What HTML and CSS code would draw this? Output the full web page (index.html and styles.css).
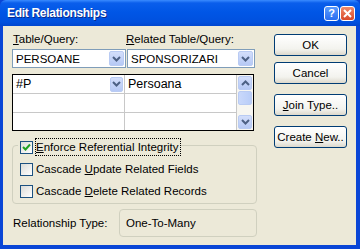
FILE: index.html
```html
<!DOCTYPE html>
<html lang="en">
<head>
  <meta charset="UTF-8">
  <title>Edit Relationships</title>
  <link rel="stylesheet" href="styles.css">
</head>
<body>

<div class="window">
  <!-- title bar -->
  <div class="titlebar">
    <span class="title">Edit Relationships</span>
    <div class="caption-btns">
      <span class="cap-btn help">?</span>
      <span class="cap-btn close">
        <svg width="9" height="9" viewBox="0 0 9 9"><path d="M1 1 L8 8 M8 1 L1 8" stroke="#fff" stroke-width="2"/></svg>
      </span>
    </div>
  </div>

  <div class="client">
    <div class="main">
      <div class="labels">
        <span class="lbl-left"><u>T</u>able/Query:</span>
        <span><u>R</u>elated Table/Query:</span>
      </div>

      <div class="combos">
        <div class="combo combo-left">
          <span class="combo-text">PERSOANE</span>
          <span class="drop"><svg width="9" height="6" viewBox="0 0 9 6"><path d="M1 1 L4.5 4.5 L8 1" fill="none" stroke="#4d6185" stroke-width="2"/></svg></span>
        </div>
        <div class="combo combo-right">
          <span class="combo-text">SPONSORIZARI</span>
          <span class="drop"><svg width="9" height="6" viewBox="0 0 9 6"><path d="M1 1 L4.5 4.5 L8 1" fill="none" stroke="#4d6185" stroke-width="2"/></svg></span>
        </div>
      </div>

      <!-- field grid -->
      <div class="grid">
        <div class="col col-a">
          <div class="cell">
            <span>#P</span>
            <span class="drop cell-drop"><svg width="9" height="6" viewBox="0 0 9 6"><path d="M1 1 L4.5 4.5 L8 1" fill="none" stroke="#4d6185" stroke-width="2"/></svg></span>
          </div>
          <div class="cell"></div>
          <div class="cell last"></div>
        </div>
        <div class="col col-b">
          <div class="cell">Persoana</div>
          <div class="cell"></div>
          <div class="cell last"></div>
        </div>
        <div class="vscroll">
          <span class="sbtn"><svg width="9" height="6" viewBox="0 0 9 6"><path d="M1 5 L4.5 1.5 L8 5" fill="none" stroke="#4d6185" stroke-width="2"/></svg></span>
          <span class="thumb"></span>
          <span class="track"></span>
          <span class="sbtn"><svg width="9" height="6" viewBox="0 0 9 6"><path d="M1 1 L4.5 4.5 L8 1" fill="none" stroke="#4d6185" stroke-width="2"/></svg></span>
        </div>
      </div>

      <!-- options -->
      <div class="group">
        <div class="chk-row legend">
          <span class="chk checked"><svg width="9" height="9" viewBox="0 0 9 9"><path d="M1 4 L3.5 6.5 L8 1.5" fill="none" stroke="#21a121" stroke-width="2"/></svg></span>
          <span class="focus"><u>E</u>nforce Referential Integrity</span>
        </div>
        <div class="chk-row">
          <span class="chk"></span>
          <span class="chk-text">Cascade <u>U</u>pdate Related Fields</span>
        </div>
        <div class="chk-row">
          <span class="chk"></span>
          <span class="chk-text">Cascade <u>D</u>elete Related Records</span>
        </div>
      </div>

      <div class="reltype">
        <span class="reltype-lbl">Relationship Type:</span>
        <div class="reltype-box">One-To-Many</div>
      </div>
    </div>

    <div class="buttons">
      <button class="btn">OK</button>
      <button class="btn">Cancel</button>
      <button class="btn btn-sep"><u>J</u>oin Type..</button>
      <button class="btn btn-sep">Create <u>N</u>ew..</button>
    </div>
  </div>
</div>

</body>
</html>
```

FILE: styles.css
```css
body {
  margin: 0;
  padding: 0;
  font-family: "Liberation Sans", Arial, sans-serif;
  font-size: 11.5px;
  color: #000;
}
.window {
  width: 360px;
  height: 249px;
  box-sizing: border-box;
  background-color: #0a46d6;
  display: flex;
  flex-direction: column;
  padding: 0 4px 4px 3px;
}
.titlebar {
  height: 26px;
  margin: 0 -4px 0 -3px;
  display: flex;
  align-items: center;
  justify-content: space-between;
  padding: 0 5px 0 7px;
  background: linear-gradient(#3a8bff 0, #0a5eeb 3px, #0056e6 12px, #0050de 22px, #0046cf 26px);
  border-radius: 6px 6px 0 0;
}
.title {
  color: #fff;
  font-weight: bold;
  font-size: 12px;
  letter-spacing: -0.3px;
  text-shadow: 1px 1px 0 #0a2a8a;
}
.caption-btns {
  display: flex;
  gap: 1px;
}
.cap-btn {
  width: 13px;
  height: 13px;
  border: 1px solid #fff;
  border-radius: 3px;
  display: flex;
  align-items: center;
  justify-content: center;
}
.help {
  background: linear-gradient(#5a9cff, #2a6ef0);
  color: #fff;
  font-weight: bold;
  font-size: 11px;
}
.close {
  background: linear-gradient(#f08a6a, #d8482a);
}
.client {
  flex: 1;
  background-color: #ece9d8;
  display: flex;
  align-items: flex-start;
  padding: 6px 0 0 9px;
}
.main {
  width: 245px;
}
.labels {
  display: flex;
  height: 14px;
  line-height: 14px;
  padding-left: 1px;
}
.lbl-left {
  width: 113px;
}
.combos {
  display: flex;
  margin-top: 3px;
  gap: 1px;
}
.combo {
  height: 19px;
  box-sizing: border-box;
  border: 1px solid #7f9db9;
  background-color: #fff;
  display: flex;
  align-items: center;
  justify-content: space-between;
  padding: 0 1px 0 3px;
}
.combo-left {
  width: 114px;
}
.combo-right {
  width: 128px;
}
.drop {
  width: 15px;
  height: 15px;
  box-sizing: border-box;
  border: 1px solid #b9cbf3;
  border-radius: 2px;
  background: linear-gradient(#d3defb, #b6c9f5);
  display: flex;
  align-items: center;
  justify-content: center;
}
.grid {
  margin-top: 6px;
  width: 242px;
  height: 57px;
  box-sizing: border-box;
  border: 1px solid #000;
  background-color: #fff;
  display: flex;
}
.col {
  border-right: 1px solid #c8c8c8;
}
.col-a {
  width: 111px;
}
.col-b {
  width: 111px;
}
.cell {
  height: 18px;
  border-bottom: 1px solid #c8c8c8;
  display: flex;
  align-items: center;
  justify-content: space-between;
  padding: 0 1px 0 3px;
  font-size: 12.5px;
}
.cell.last {
  height: 17px;
  border-bottom: none;
}
.cell-drop {
  width: 13px;
}
.vscroll {
  flex: 1;
  display: flex;
  flex-direction: column;
  padding: 1px;
  gap: 1px;
  background-color: #f7f6f1;
}
.sbtn {
  height: 14px;
  box-sizing: border-box;
  border: 1px solid #b9cbf3;
  border-radius: 2px;
  background: linear-gradient(#d3defb, #b6c9f5);
  display: flex;
  align-items: center;
  justify-content: center;
}
.thumb {
  height: 14px;
  box-sizing: border-box;
  border: 1px solid #b9cbf3;
  border-radius: 2px;
  background: linear-gradient(90deg, #c9d8fb, #b9cdf8);
}
.track {
  flex: 1;
}
.group {
  margin-top: 14px;
  width: 245px;
  height: 59px;
  box-sizing: border-box;
  border: 1px solid #d0d0bf;
  border-radius: 4px;
  display: flex;
  flex-direction: column;
  gap: 6px;
  padding-left: 7px;
}
.chk-row {
  height: 16px;
  display: flex;
  align-items: center;
  gap: 2px;
}
.legend {
  margin-top: -7px;
  margin-left: -2px;
  padding-left: 2px;
  align-self: flex-start;
  background-color: #ece9d8;
}
.chk {
  width: 13px;
  height: 13px;
  box-sizing: border-box;
  border: 1px solid #1c5180;
  background: linear-gradient(135deg, #dcdcd7, #fff);
  display: flex;
  align-items: center;
  justify-content: center;
}
.focus {
  border: 1px dotted #000;
  padding: 1px 1px 1px 0;
  height: 14px;
  line-height: 14px;
}
.chk-text {
  padding-left: 1px;
}
.reltype {
  display: flex;
  align-items: center;
  margin-top: 5px;
}
.reltype-lbl {
  width: 106px;
  padding-left: 1px;
}
.reltype-box {
  width: 138px;
  height: 28px;
  box-sizing: border-box;
  border: 1px solid #d0d0bf;
  border-radius: 4px;
  display: flex;
  align-items: center;
  padding-left: 6px;
}
.buttons {
  margin-left: 17px;
  margin-top: 2px;
  display: flex;
  flex-direction: column;
  gap: 6px;
}
.btn {
  width: 73px;
  height: 22px;
  box-sizing: border-box;
  border: 1px solid #003c74;
  border-radius: 3px;
  background: linear-gradient(#ffffff, #f3f3ee 70%, #dcd8cc);
  font-family: "Liberation Sans", Arial, sans-serif;
  font-size: 11.5px;
  color: #000;
  padding: 0;
}
.btn-sep {
  margin-top: 4px;
}
```
